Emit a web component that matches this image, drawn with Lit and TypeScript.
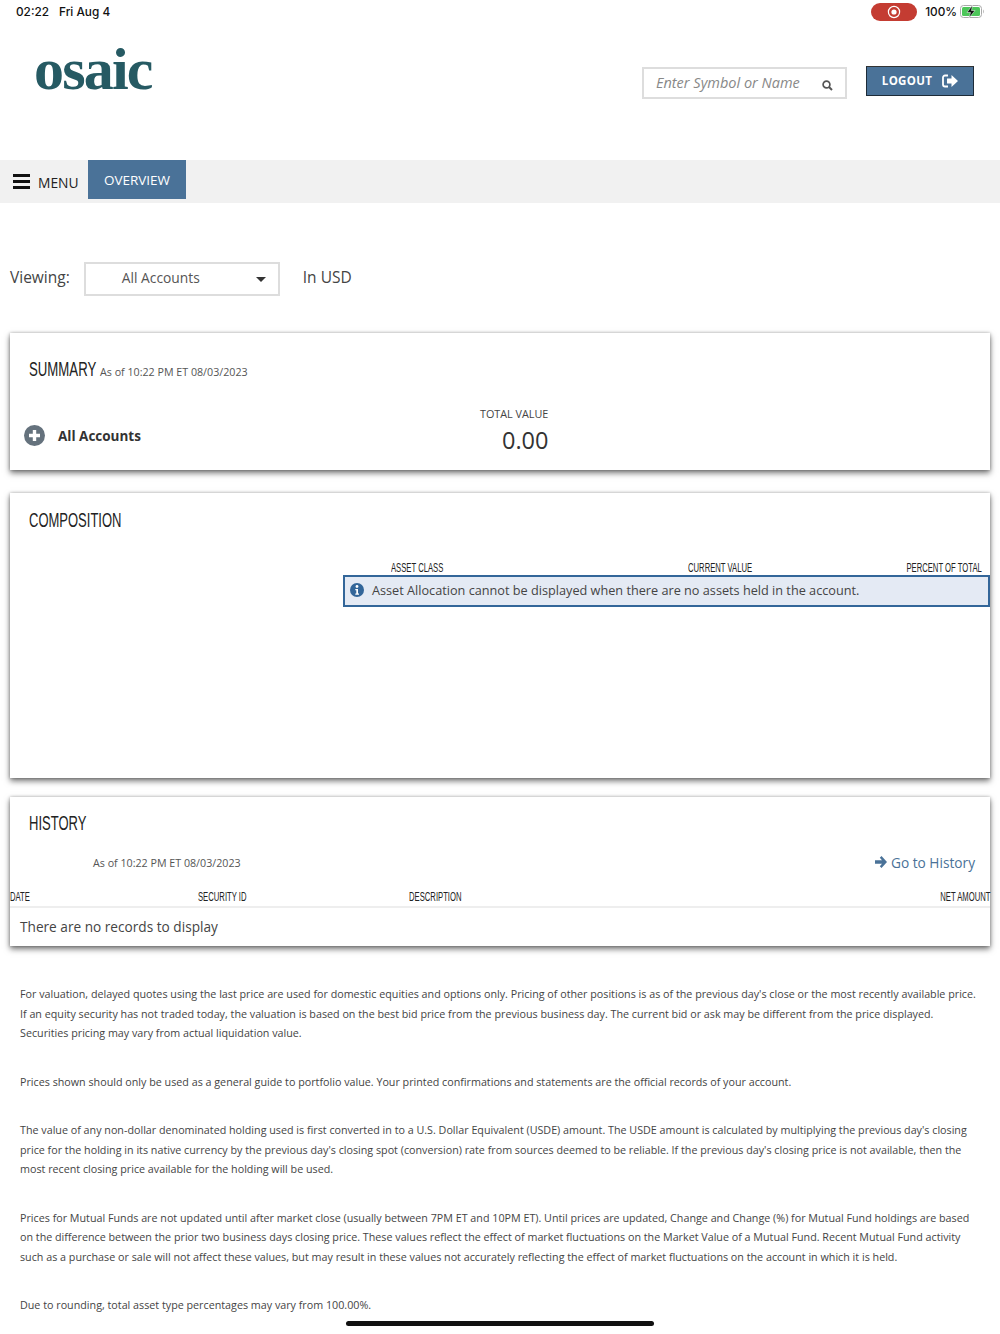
import { LitElement, html, css } from "lit";
import { customElement } from "lit/decorators.js";

@customElement("app-root")
export class AppRoot extends LitElement {
  static styles = css`
    :host { display: block; position: relative; width: 1000px; height: 1334px; overflow: hidden; background: #fff; font-family: "Open Sans", sans-serif; color: #333; }
    .status { height: 24px; box-sizing: border-box; display: flex; align-items: center; padding: 0 15px 1px 16px; font-family: Inter, "Liberation Sans", sans-serif; font-size: 11.8px; font-weight: 500; color: #111; }
    .status .time { margin-right: 10px; }
    .status .rec { margin-left: auto; width: 46px; height: 18px; border-radius: 9px; background: #c43c32; display: flex; align-items: center; justify-content: center; margin-right: 8px; }
    .status .pct { margin-right: 3px; }
    .status svg { display: block; }
    .header { height: 136px; display: flex; position: relative; }
    .logo { font-family: "Liberation Serif", serif; font-weight: 700; font-size: 60px; line-height: 60px; color: #265a63; margin: 15px 0 0 34px; width: 608px; letter-spacing: -1.8px; height: 60px; }
    .search { width: 205px; height: 32px; box-sizing: border-box; border: 2px solid #ddd; margin-top: 43px; display: flex; align-items: center; padding: 0 12px; color: #888; font-style: italic; font-size: 14.5px; justify-content: space-between; }
    .search span { margin-bottom: 2px; }
    .search svg { margin-top: 4px; }
    .logout { margin: 42px 0 0 19px; width: 108px; height: 30px; box-sizing: border-box; padding-bottom: 1px; background: #4a7298; border: 1px solid #1d2b38; border-top-color: #333; color: #fff; font-weight: 700; font-size: 11.5px; letter-spacing: .3px; display: flex; align-items: center; justify-content: center; gap: 10px; }
    .nav { height: 43px; background: #f1f1f1; display: flex; align-items: flex-start; }
    .menu { display: flex; align-items: flex-start; width: 88px; box-sizing: border-box; padding: 14px 0 0 13px; gap: 8px; font-size: 13.8px; color: #222; }
    .menu span { margin-top: -1px; }
    .tab { background: #4a7298; color: #fff; width: 98px; height: 39px; display: flex; align-items: center; justify-content: center; font-size: 13.5px; }
    .viewing { display: flex; align-items: center; margin-top: 59px; padding-left: 10px; font-size: 15.5px; color: #444; height: 34px; }
    .viewing > span { padding-bottom: 4px; }
    .select { width: 196px; height: 34px; box-sizing: border-box; border: 2px solid #ddd; margin-left: 14px; margin-right: 23px; display: flex; align-items: center; justify-content: space-between; padding: 0 12px 0 36px; font-size: 13.8px; color: #555; }
    .select span:first-child { padding-bottom: 4px; }
    .caret { width: 0; height: 0; border-left: 5px solid transparent; border-right: 5px solid transparent; border-top: 5px solid #333; }
    .card { margin: 0 10px; background: #fff; box-shadow: 0 3px 6px rgba(0,0,0,.55), 0 0 3px rgba(0,0,0,.25); position: relative; }
    .title { font-family: "Liberation Sans", sans-serif; font-size: 20px; color: #222; transform: scaleX(.65); transform-origin: left center; white-space: nowrap; display: block; }
    .asof { font-size: 10.7px; color: #555; }
    .summary { margin-top: 37px; height: 137px; padding: 0 0 0 14px; box-sizing: border-box; }
    .sumhead { display: flex; align-items: baseline; padding: 25px 0 0 5px; height: 26px; }
    .sumhead .title { width: 71px; flex: none; transform: scaleX(.66); }
    .sumrow { display: flex; align-items: flex-start; margin-top: 22px; }
    .acct { display: flex; align-items: center; gap: 13px; width: 456px; margin-top: 19px; font-size: 13.5px; font-weight: 700; color: #333; }
    .plus { width: 21px; height: 21px; }
    .tv { display: flex; flex-direction: column; font-size: 10.8px; color: #444; }
    .tv b { font-weight: 400; font-size: 23.5px; color: #333; margin: 3px 0 0 22px; line-height: 33px; }
    .composition { margin-top: 23px; height: 285px; }
    .composition .sectitle { margin-top: 16px; }
    .sectitle { margin-left: 19px; }
    .composition::before, .history::before { content: ""; display: block; height: 1px; margin-bottom: -1px; }
    .history .sectitle { margin-top: 15px; }
    .colhead { font-family: "Liberation Sans", sans-serif; font-size: 12px; color: #222; }
    .colhead span { display: block; white-space: nowrap; transform: scaleX(.64); transform-origin: left center; }
    .colhead span:last-child { justify-self: end; transform-origin: right center; }
    .comphead { display: grid; margin: 29px 0 0 333px; height: 14px; line-height: 14px; padding-left: 48px; grid-template-columns: 297px 220px minmax(0, 1fr); padding-right: 8px; }
    .alert { margin-left: 333px; height: 32px; box-sizing: border-box; border: 2px solid #336699; background: #e4eaf4; display: flex; align-items: center; padding: 0 0 2px 5px; gap: 8px; font-size: 12.7px; color: #444; }
    .history { margin-top: 19px; height: 149px; }
    .hrow { display: flex; justify-content: space-between; align-items: center; padding: 16px 15px 0 83px; height: 22px; }
    .hrow .asof { padding-top: 2px; }
    .go { color: #4a7298; font-size: 13.7px; display: flex; align-items: center; gap: 4px; }
    .hcols { display: grid; grid-template-columns: 188px 211px minmax(0, 1fr) minmax(0, 1fr); height: 21px; margin-top: 14px; line-height: 20px; box-sizing: border-box; border-bottom: 2px solid #eee; }
    .none { padding: 9px 0 0 10px; font-size: 13.65px; color: #444; }
    .notes { padding: 39px 20px 0 20px; font-size: 10.74px; line-height: 19.5px; color: #444; }
    .notes p { margin: 0 0 29px; }
    .home { position: absolute; left: 346px; top: 1321px; width: 308px; height: 5px; border-radius: 3px; background: #111; }
  `;

  render() {
    return html`
      <div class="status">
        <span class="time">02:22</span><span>Fri Aug 4</span>
        <span class="rec"><svg width="14" height="14" viewBox="0 0 14 14"><circle cx="7" cy="7" r="5.600" fill="none" stroke="#fff" stroke-width="1.200"/><circle cx="7" cy="7" r="2.600" fill="#fff"/></svg></span>
        <span class="pct">100%</span>
        <svg width="25" height="13" viewBox="0 0 25 13"><rect x=".5" y=".5" width="21" height="12" rx="3" fill="none" stroke="#aaa"/><rect x="2" y="2" width="18" height="9" rx="1.500" fill="#4cc659"/><path d="M23 4.500c1 .4 1 3.600 0 4z" fill="#aaa"/><path d="M12.500 0 7 7.500h3.500L9 13l6-7.500h-3.500z" fill="#111" stroke="#fff" stroke-width=".5"/></svg>
      </div>
      <div class="header">
        <div class="logo">osaic</div>
        <div class="search"><span>Enter Symbol or Name</span>
          <svg width="11" height="11" viewBox="0 0 11 11"><circle cx="4.500" cy="4.500" r="3.400" fill="none" stroke="#555" stroke-width="1.700"/><path d="m7 7 3 3" stroke="#555" stroke-width="2"/></svg></div>
        <div class="logout">LOGOUT
          <svg width="16" height="14" viewBox="0 0 16 14"><path d="M6 1.500H3A2 2 0 0 0 1 3.500v7a2 2 0 0 0 2 2h3" fill="none" stroke="#fff" stroke-width="1.800"/><path d="M9.500 1 16 7l-6.500 6V9.500H5v-5h4.500z" fill="#fff"/></svg></div>
      </div>
      <div class="nav">
        <div class="menu"><svg width="17" height="15" viewBox="0 0 17 15"><path d="M0 1.500h17M0 7.500h17M0 13.500h17" stroke="#111" stroke-width="3"/></svg><span>MENU</span></div>
        <div class="tab">OVERVIEW</div>
      </div>
      <div class="viewing"><span>Viewing:</span>
        <div class="select"><span>All Accounts</span><span class="caret"></span></div><span>In USD</span>
      </div>
      <div class="card summary">
        <div class="sumhead"><span class="title">SUMMARY</span><span class="asof">As of 10:22 PM ET 08/03/2023</span></div>
        <div class="sumrow">
          <div class="acct"><svg class="plus" viewBox="0 0 21 21"><circle cx="10.500" cy="10.500" r="10.500" fill="#65727d"/><path d="M10.500 5v11M5 10.500h11" stroke="#fff" stroke-width="3.400"/></svg>All Accounts</div>
          <div class="tv">TOTAL VALUE<b>0.00</b></div>
        </div>
      </div>
      <div class="card composition">
        <div class="sectitle title">COMPOSITION</div>
        <div class="comphead colhead"><span>ASSET CLASS</span><span>CURRENT VALUE</span><span>PERCENT OF TOTAL</span></div>
        <div class="alert"><svg width="14" height="14" viewBox="0 0 14 14"><circle cx="7" cy="7" r="7" fill="#336699"/><circle cx="7" cy="3.500" r="1.400" fill="#fff"/><path d="M5.300 6h2.700v4.500h1v1.200H5.300v-1.200h1V7.200h-1z" fill="#fff"/></svg>Asset Allocation cannot be displayed when there are no assets held in the account.</div>
      </div>
      <div class="card history">
        <div class="sectitle title">HISTORY</div>
        <div class="hrow"><span class="asof">As of 10:22 PM ET 08/03/2023</span>
          <span class="go"><svg width="12" height="12" viewBox="0 0 12 12"><path d="M6.500 0 12 6l-5.500 6-1.700-1.700L7 7.800H0V4.200h7L4.800 1.700z" fill="#4a7298"/></svg>Go to History</span></div>
        <div class="hcols colhead"><span>DATE</span><span>SECURITY ID</span><span>DESCRIPTION</span><span>NET AMOUNT</span></div>
        <div class="none">There are no records to display</div>
      </div>
      <div class="notes">
        <p>For valuation, delayed quotes using the last price are used for domestic equities and options only. Pricing of other positions is as of the previous day's close or the most recently available price. If an equity security has not traded today, the valuation is based on the best bid price from the previous business day. The current bid or ask may be different from the price displayed. Securities pricing may vary from actual liquidation value.</p>
        <p>Prices shown should only be used as a general guide to portfolio value. Your printed confirmations and statements are the official records of your account.</p>
        <p>The value of any non-dollar denominated holding used is first converted in to a U.S. Dollar Equivalent (USDE) amount. The USDE amount is calculated by multiplying the previous day's closing price for the holding in its native currency by the previous day's closing spot (conversion) rate from sources deemed to be reliable. If the previous day's closing price is not available, then the most recent closing price available for the holding will be used.</p>
        <p>Prices for Mutual Funds are not updated until after market close (usually between 7PM ET and 10PM ET). Until prices are updated, Change and Change (%) for Mutual Fund holdings are based on the difference between the prior two business days closing price. These values reflect the effect of market fluctuations on the Market Value of a Mutual Fund. Recent Mutual Fund activity such as a purchase or sale will not affect these values, but may result in these values not accurately reflecting the effect of market fluctuations on the account in which it is held.</p>
        <p>Due to rounding, total asset type percentages may vary from 100.00%.</p>
      </div>
      <div class="home"></div>
    `;
  }
}
